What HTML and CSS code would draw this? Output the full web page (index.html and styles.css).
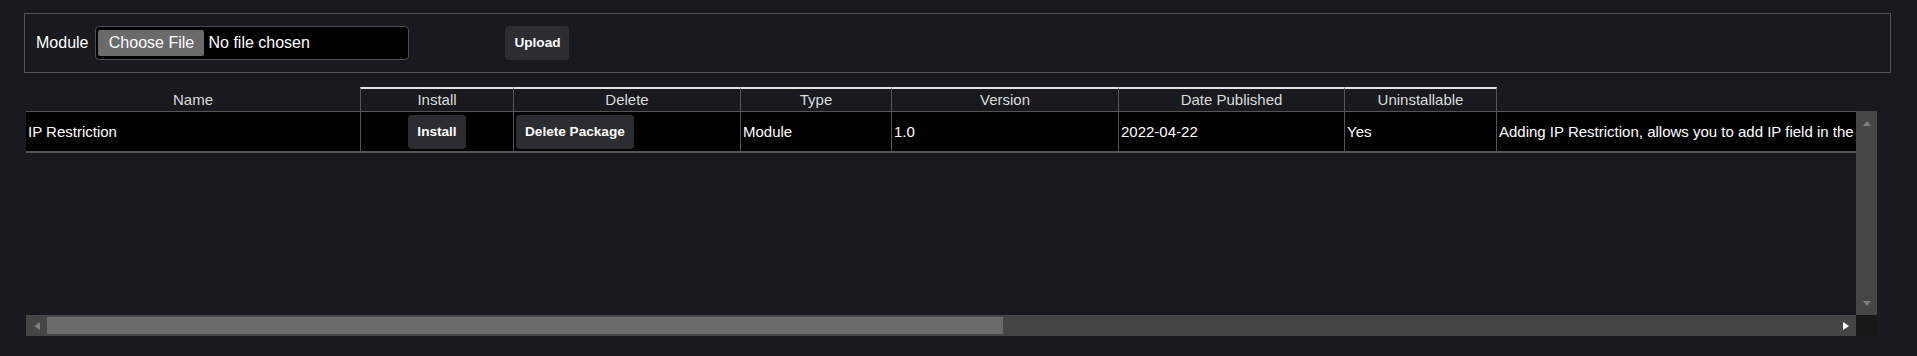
FILE: index.html
```html
<!doctype html>
<html>
  <head>
    <title>Packages</title>
    <meta charset="utf-8" />
    <link rel="stylesheet" href="styles.css">
  </head>
  <body>
    <div class='page'>
      <form class='upload'>
        <label class='label'>Module</label>
        <div class='file'>
          <span class='file-btn'>Choose File</span>
          <span class='file-name'>No file chosen</span>
        </div>
        <button class='btn upload-btn' type='button'>Upload</button>
      </form>

      <div class='packages'>
        <div class='row head'>
          <div class='cell'>Name</div>
          <div class='cell th'>Install</div>
          <div class='cell th'>Delete</div>
          <div class='cell th'>Type</div>
          <div class='cell th'>Version</div>
          <div class='cell th'>Date Published</div>
          <div class='cell th last'>Uninstallable</div>
        </div>

        <div class='frame'>
          <div class='view'>
            <div class='row item'>
              <div class='cell'>IP Restriction</div>
              <div class='cell center'><button class='btn' type='button'>Install</button></div>
              <div class='cell'><button class='btn' type='button'>Delete Package</button></div>
              <div class='cell'>Module</div>
              <div class='cell'>1.0</div>
              <div class='cell'>2022-04-22</div>
              <div class='cell'>Yes</div>
              <div class='cell'>Adding IP Restriction, allows you to add IP field in the user profile so that a user can only log in from the allowed IP addresses.</div>
            </div>
          </div>
          <div class='vbar'>
            <div class='vbtn'><span class='tri up'></span></div>
            <div class='vbtn'><span class='tri down'></span></div>
          </div>
          <div class='hbar'>
            <div class='hbtn'><span class='tri left'></span></div>
            <div class='thumb'></div>
            <div class='track'></div>
            <div class='hbtn'><span class='tri right'></span></div>
          </div>
          <div class='corner'></div>
        </div>
      </div>
    </div>
  </body>
</html>
```

FILE: styles.css
```css
body {
  margin: 0;
  background-color: #181a1f;
  color: #ffffff;
  font-family: "Liberation Sans", Arial, sans-serif;
}

.page {
  padding: 13px 0 0 24px;
}

/* upload box */
.upload {
  box-sizing: border-box;
  width: 1867px;
  height: 60px;
  margin: 0;
  padding-left: 11px;
  border: 1px solid #505357;
  display: flex;
  align-items: center;
}

.label {
  font-size: 16px;
  margin-right: 7px;
}

.file {
  box-sizing: border-box;
  width: 314px;
  height: 34px;
  padding-left: 2px;
  background-color: #000000;
  border: 1px solid #4e4e4e;
  border-radius: 4px;
  display: flex;
  align-items: center;
}

.file-btn {
  width: 106px;
  height: 26px;
  background-color: #6b6b6b;
  border-radius: 2px;
  font-size: 16px;
  display: flex;
  align-items: center;
  justify-content: center;
}

.file-name {
  font-size: 16px;
  margin-left: 4px;
}

.btn {
  height: 34px;
  padding: 0 9px 1px 9px;
  border: 0;
  border-radius: 4px;
  background-color: #2c2d30;
  color: #ffffff;
  font-family: "Liberation Sans", Arial, sans-serif;
  font-weight: bold;
  font-size: 13.6px;
}

.upload-btn {
  width: 64px;
  padding: 0 0 2px 0;
  margin-left: 96px;
}

/* table */
.packages {
  margin: 14px 0 0 2px;
}

.row {
  display: grid;
  grid-template-columns: 334px 153px 227px 151px 227px 226px 152px 1950px;
}

.cell {
  box-sizing: border-box;
  font-size: 15px;
  white-space: nowrap;
}

.head {
  grid-template-columns: 334px 153px 227px 151px 227px 226px 153px;
  height: 24px;
  color: #dcdcdc;
}

.head .cell {
  text-align: center;
  line-height: 22px;
  padding-top: 2px;
}

.head .th {
  padding-top: 0;
  border-top: 2px solid #e4e4e4;
  border-left: 1px solid #555555;
}

.head .last {
  border-right: 1px solid #555555;
}

.frame {
  display: grid;
  grid-template-columns: 1830px 21px;
  grid-template-rows: 204px 21px;
}

.view {
  overflow: hidden;
}

.item {
  box-sizing: border-box;
  width: max-content;
  height: 42px;
  background-color: #000000;
  border-top: 1px solid #555555;
  border-bottom: 2px solid #555555;
}

.item .cell {
  padding: 0 2px;
  display: flex;
  align-items: center;
}

.item .cell + .cell {
  border-left: 1px solid #555555;
}

.item .center {
  justify-content: center;
}

/* scrollbars */
.vbar {
  background-color: #464646;
  display: flex;
  flex-direction: column;
  justify-content: space-between;
}

.vbtn {
  height: 24px;
  display: flex;
  align-items: center;
  justify-content: center;
}

.hbar {
  background-color: #454545;
  display: flex;
  align-items: center;
}

.hbtn {
  width: 21px;
  height: 21px;
  display: flex;
  align-items: center;
  justify-content: center;
}

.thumb {
  width: 956px;
  height: 17px;
  background-color: #6b6b6b;
}

.track {
  flex: 1;
}

.corner {
  background-color: #171717;
}

.tri {
  width: 0;
  height: 0;
}

.up {
  border-left: 4.5px solid transparent;
  border-right: 4.5px solid transparent;
  border-bottom: 5px solid #808080;
}

.down {
  border-left: 4.5px solid transparent;
  border-right: 4.5px solid transparent;
  border-top: 5px solid #808080;
}

.left {
  border-top: 4.5px solid transparent;
  border-bottom: 4.5px solid transparent;
  border-right: 6px solid #808080;
}

.right {
  border-top: 4.5px solid transparent;
  border-bottom: 4.5px solid transparent;
  border-left: 6px solid #ffffff;
}
```
